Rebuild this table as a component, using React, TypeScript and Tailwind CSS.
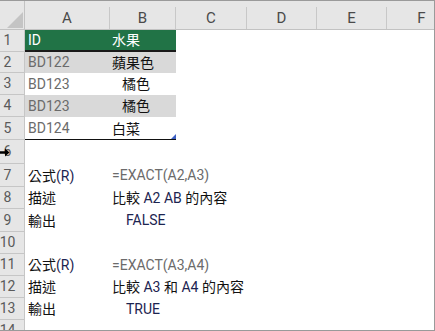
import React from 'react'

const latin = '[font-family:Roboto,"Noto_Sans_CJK_TC",sans-serif]'

// row heights measured off the sheet
const rowHeights = [22, 21, 22, 22, 23, 24, 23, 22, 23, 22, 22, 22, 22, 22]

const cols = [
  { name: 'A', w: 'w-[85px]' },
  { name: 'B', w: 'w-[66px]' },
  { name: 'C', w: 'w-[71px]' },
  { name: 'D', w: 'w-[70px]' },
  { name: 'E', w: 'w-[70px]' },
  { name: 'F', w: 'w-[70px]' },
]

function Cjk({ children }: { children: React.ReactNode }) {
  return <span className='[font-family:"Noto_Sans_CJK_TC",sans-serif]'>{children}</span>
}

function ArrowCursor() {
  return (
    <svg width="10" height="9" viewBox="0 0 10 9" className="absolute left-0 top-[8px]">
      <path d="M0 3.2 H5 V0.5 L9.5 4.5 L5 8.5 V5.8 H0 Z" fill="#000" />
    </svg>
  )
}

function FillHandle() {
  return (
    <svg width="5" height="5" viewBox="0 0 5 5" className="absolute right-0 bottom-0">
      <path d="M5 0 V5 H0 Z" fill="#3b5fc4" />
    </svg>
  )
}

type Row = {
  a?: React.ReactNode
  b?: React.ReactNode
  band?: 'head' | 'gray' | 'white'
  bBorder?: boolean
}

const rows: Row[] = [
  { a: <span className="text-white">ID</span>, b: <span className="text-white"><Cjk>水果</Cjk></span>, band: 'head' },
  { a: 'BD122', b: <Cjk>蘋果色</Cjk>, band: 'gray' },
  { a: 'BD123', b: <span className="pl-[10px]"><Cjk>橘色</Cjk></span>, band: 'white' },
  { a: 'BD123', b: <span className="pl-[10px]"><Cjk>橘色</Cjk></span>, band: 'gray' },
  { a: 'BD124', b: <Cjk>白菜</Cjk>, band: 'white', bBorder: true },
  {},
  {
    a: <span className="text-[#111]"><Cjk>公式</Cjk><span className="text-[#1c2450]">(R)</span></span>,
    b: <span className="text-[#6b6b6b]">=EXACT(A2,A3)</span>,
  },
  {
    a: <span className="text-[#111]"><Cjk>描述</Cjk></span>,
    b: <span className="text-[#111]"><Cjk>比較</Cjk> <span className="text-[#1c2450]">A2 AB</span> <Cjk>的內容</Cjk></span>,
  },
  {
    a: <span className="text-[#111]"><Cjk>輸出</Cjk></span>,
    b: <span className="pl-[14px] text-[#1c2450]">FALSE</span>,
  },
  {},
  {
    a: <span className="text-[#111]"><Cjk>公式</Cjk><span className="text-[#1c2450]">(R)</span></span>,
    b: <span className="text-[#6b6b6b]">=EXACT(A3,A4)</span>,
  },
  {
    a: <span className="text-[#111]"><Cjk>描述</Cjk></span>,
    b: <span className="text-[#111]"><Cjk>比較</Cjk> <span className="text-[#1c2450]">A3</span> <Cjk>和</Cjk> <span className="text-[#1c2450]">A4</span> <Cjk>的內容</Cjk></span>,
  },
  {
    a: <span className="text-[#111]"><Cjk>輸出</Cjk></span>,
    b: <span className="pl-[14px] text-[#1c2450]">TRUE</span>,
  },
  {},
]

export default function App() {
  return (
    <div className={`w-[435px] h-[331px] overflow-hidden bg-white border-t border-r border-b border-[#9a9a9a] text-[14px] ${latin}`}>
      {/* column headers */}
      <div className="flex h-[29px] bg-[#e6e6e6] border-b border-[#c2c2c2]">
        <div className="relative w-[25px] shrink-0 border-r border-[#c2c2c2]">
          <svg width="16" height="16" viewBox="0 0 16 16" className="absolute left-[7px] top-[11px]">
            <path d="M16 0 V16 H0 Z" fill="#c4c4c4" />
          </svg>
        </div>
        {cols.map((c) => (
          <div key={c.name} className={`${c.w} shrink-0 flex flex-col`}>
            <div className="h-[8px]" />
            <div className="flex-1 flex items-center justify-center border-r border-[#c8c8c8] text-[15px] text-[#4a4a4a]">
              {c.name}
            </div>
          </div>
        ))}
      </div>

      {/* rows */}
      {rows.map((r, i) => {
        const fill =
          r.band === 'head' ? 'bg-[#217346]' : r.band === 'gray' ? 'bg-[#d9d9d9]' : 'bg-white'
        return (
          <div key={i} className="flex" style={{ height: rowHeights[i] }}>
            <div className="relative w-[25px] shrink-0 bg-[#e6e6e6] border-r border-b border-[#c6c6c6] text-[#5a5a5a] text-[14px]">
              <div className="w-[15px] h-full flex items-center justify-center">{i + 1}</div>
              {i === 5 && <ArrowCursor />}
            </div>
            <div
              className={`relative flex shrink-0 ${r.band ? fill : ''} ${r.band === 'head' ? 'border-b-2 border-[#1a1a1a]' : ''} ${r.bBorder ? 'border-b border-[#111]' : ''}`}
            >
              <div className="w-[85px] flex items-center pl-[3px] text-[#6b6b6b] whitespace-nowrap">{r.a}</div>
              <div className="w-[66px] flex items-center pl-[2px] text-[#111] whitespace-nowrap">{r.b}</div>
              {r.bBorder && <FillHandle />}
            </div>
            <div className="flex-1" />
          </div>
        )
      })}
    </div>
  )
}
